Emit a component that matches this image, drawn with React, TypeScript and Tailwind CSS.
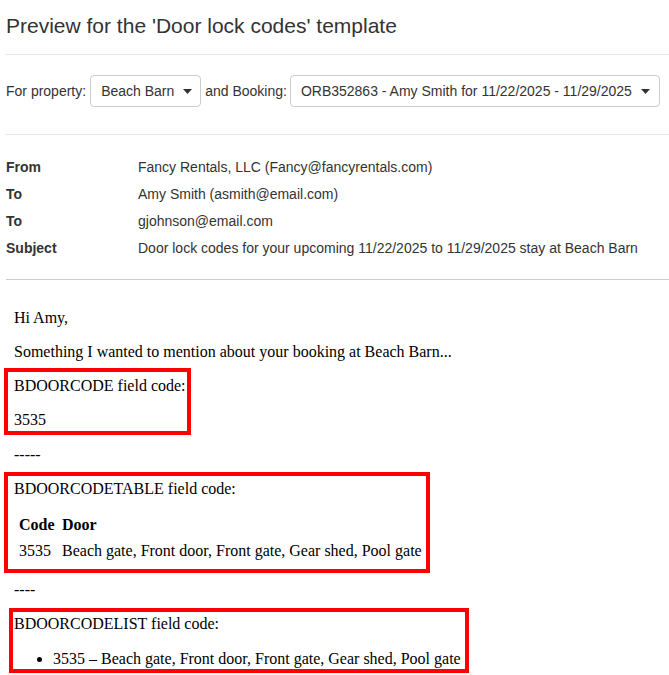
import React from "react";

function Caret() {
  return (
    <svg width="9" height="5" viewBox="0 0 9 5" className="ml-[9px]">
      <path d="M0 0 L9 0 L4.5 5 Z" fill="#333" />
    </svg>
  );
}

export default function App() {
  const rows: [string, string][] = [
    ["From", "Fancy Rentals, LLC (Fancy@fancyrentals.com)"],
    ["To", "Amy Smith (asmith@email.com)"],
    ["To", "gjohnson@email.com"],
    ["Subject", "Door lock codes for your upcoming 11/22/2025 to 11/29/2025 stay at Beach Barn"],
  ];
  return (
    <div className="w-[669px] h-[675px] overflow-hidden bg-white">
      <div className="pl-[6px] text-[#333] font-['Liberation_Sans',Arial,sans-serif]">
        <h1 className="pt-[14px] text-[21px] leading-[24px] font-normal">
          Preview for the 'Door lock codes' template
        </h1>
        <div className="mt-[16px] h-px bg-[#e5e5e5]" />
        <div className="mt-[20px] flex items-center text-[14px] h-[32px]">
          <span>For property:</span>
          <div className="ml-[4px] flex items-center h-[32px] w-[111px] border border-[#ccc] rounded-[4px] pl-[10px]">
            <span>Beach Barn</span>
            <Caret />
          </div>
          <span className="ml-[4px]">and Booking:</span>
          <div className="ml-[3px] flex items-center h-[32px] w-[370px] border border-[#ccc] rounded-[4px] pl-[10px]">
            <span>ORB352863 - Amy Smith for 11/22/2025 - 11/29/2025</span>
            <Caret />
          </div>
        </div>
        <div className="mt-[27px] h-px bg-[#e5e5e5]" />
        <div className="pt-[19px] text-[14px]">
          {rows.map(([k, v], i) => (
            <div key={i} className="flex h-[27px] items-center">
              <span className="w-[132px] font-bold">{k}</span>
              <span>{v}</span>
            </div>
          ))}
        </div>
        <div className="mt-[17px] h-px bg-[#cccccc]" />
      </div>
      <div className="font-['Liberation_Serif','Times_New_Roman',serif] text-[16px] leading-[18px] text-black">
        <p className="mt-[29px] pl-[14px]">Hi Amy,</p>
        <p className="mt-[16px] pl-[14px]">Something I wanted to mention about your booking at Beach Barn...</p>
        <div className="mt-[7px] ml-[4px] w-[187px] border-4 border-[#ff0000] pt-[5px] pb-[2px] pl-[6px]">
          <p>BDOORCODE field code:</p>
          <p className="mt-[16px]">3535</p>
        </div>
        <p className="mt-[11px] pl-[14px]">-----</p>
        <div className="mt-[8px] ml-[4px] w-[426px] border-4 border-[#ff0000] pt-[4px] pb-[9px] pl-[6px]">
          <p>BDOORCODETABLE field code:</p>
          <table className="mt-[18px] ml-[5px] border-collapse">
            <thead>
              <tr>
                <th className="w-[43px] p-0 text-left font-bold">Code</th>
                <th className="p-0 text-left font-bold">Door</th>
              </tr>
            </thead>
            <tbody>
              <tr>
                <td className="p-0 pt-[8px]">3535</td>
                <td className="p-0 pt-[8px]">Beach gate, Front door, Front gate, Gear shed, Pool gate</td>
              </tr>
            </tbody>
          </table>
        </div>
        <p className="mt-[8px] pl-[14px]">----</p>
        <div className="mt-[9px] ml-[9px] w-[460px] border-4 border-[#ff0000] pt-[3px] pb-[1px] pl-[1px]">
          <p>BDOORCODELIST field code:</p>
          <ul className="mt-[17px] pl-[39px] list-disc">
            <li>3535 – Beach gate, Front door, Front gate, Gear shed, Pool gate</li>
          </ul>
        </div>
      </div>
    </div>
  );
}
